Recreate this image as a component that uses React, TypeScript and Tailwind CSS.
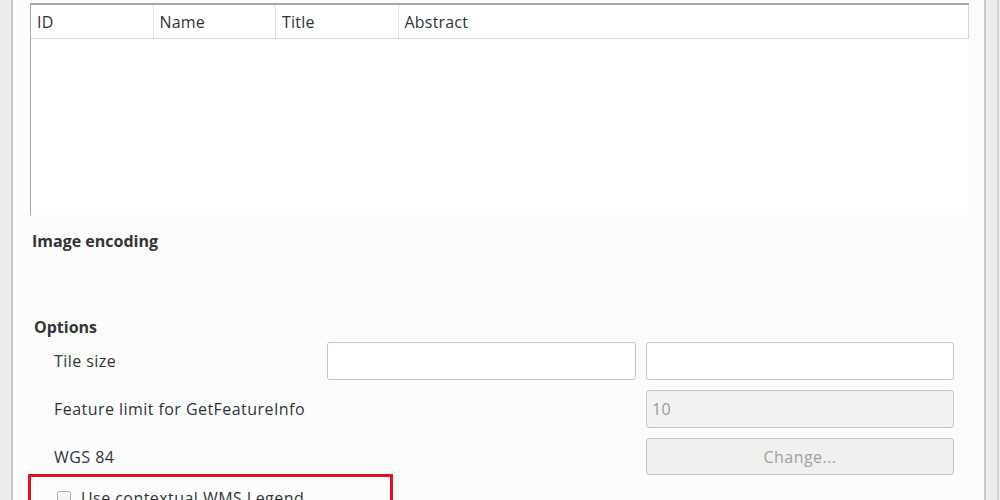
const columns = ["ID", "Name", "Title", "Abstract"];

function Field({ value, disabled }: { value?: string; disabled?: boolean }) {
  return (
    <div
      className={
        "flex h-full items-center rounded-[3px] border border-[#c4c4c4] px-[5px] text-[16px] " +
        (disabled ? "bg-[#f2f2f1] text-[#9a9a9a]" : "bg-white text-[#2e3436]")
      }
    >
      {value}
    </div>
  );
}

export default function App() {
  return (
    <div
      className="flex h-[500px] w-[1000px] overflow-hidden bg-[#fcfcfc] text-[#2e3436]"
      style={{ fontFamily: '"Open Sans", "Noto Sans", sans-serif' }}
    >
      {/* left frame */}
      <div className="w-[13px] shrink-0 border-r-2 border-[#c8c8c8] bg-[#ececec]" />

      <div className="flex min-w-0 flex-1 flex-col pr-[15px] pl-[17px] pt-[3px]">
        {/* layers table */}
        <div className="flex h-[212px] shrink-0 flex-col border-t-2 border-l border-[#a8a8a8] bg-white">
          <div className="flex h-[34px] shrink-0 border-r border-b border-[#d4d4d4]">
            {columns.map((c, i) => (
              <div
                key={c}
                className={
                  "flex items-center px-[6px] text-[16px] tracking-[0.2px] text-[#2e3436] " +
                  (i < 3 ? "w-[122.5px] border-r border-[#e0e0e0]" : "flex-1")
                }
              >
                {c}
              </div>
            ))}
          </div>
          <div className="flex-1" />
        </div>

        <div className="mt-[16px] shrink-0 pl-[2px] text-[16px] leading-[20px] font-bold text-[#333]">
          Image encoding
        </div>

        <div className="mt-[66px] shrink-0 pl-[4px] text-[16px] leading-[20px] font-bold text-[#333]">
          Options
        </div>

        <div className="mt-[5px] grid shrink-0 grid-cols-[263px_309px_308px] gap-x-[10px] gap-y-[10px] pl-[24px] text-[16px] tracking-[0.45px]">
          <div className="flex h-[38px] items-center">Tile size</div>
          <Field />
          <Field />

          <div className="flex h-[38px] items-center whitespace-nowrap">Feature limit for GetFeatureInfo</div>
          <div />
          <Field value="10" disabled />

          <div className="flex h-[37px] items-center">WGS 84</div>
          <div />
          <div className="flex h-[37px] items-center justify-center rounded-[3px] border border-[#c4c4c4] bg-[#f0f0ef] text-[#a0a0a0]">
            Change...
          </div>
        </div>

        <div className="-mt-[1px] ml-[-2px] h-[60px] w-[365px] shrink-0 border-[3px] border-[#e4101e] pt-[11px] pl-[26px]">
          <div className="flex items-center gap-[10px]">
            <div className="h-[14px] w-[14px] rounded-[3px] border border-[#a8a8a8] bg-gradient-to-b from-white to-[#e8e8e8]" />
            <span className="text-[16px] leading-[20px] tracking-[0.45px]">Use contextual WMS Legend</span>
          </div>
        </div>
      </div>

      {/* right frame */}
      <div className="w-[16px] shrink-0 border-l-2 border-[#c8c8c8] bg-[#ececec]">
        <div className="ml-[11px] h-full w-[2px] bg-[#d4d4d4]" />
      </div>
    </div>
  );
}
